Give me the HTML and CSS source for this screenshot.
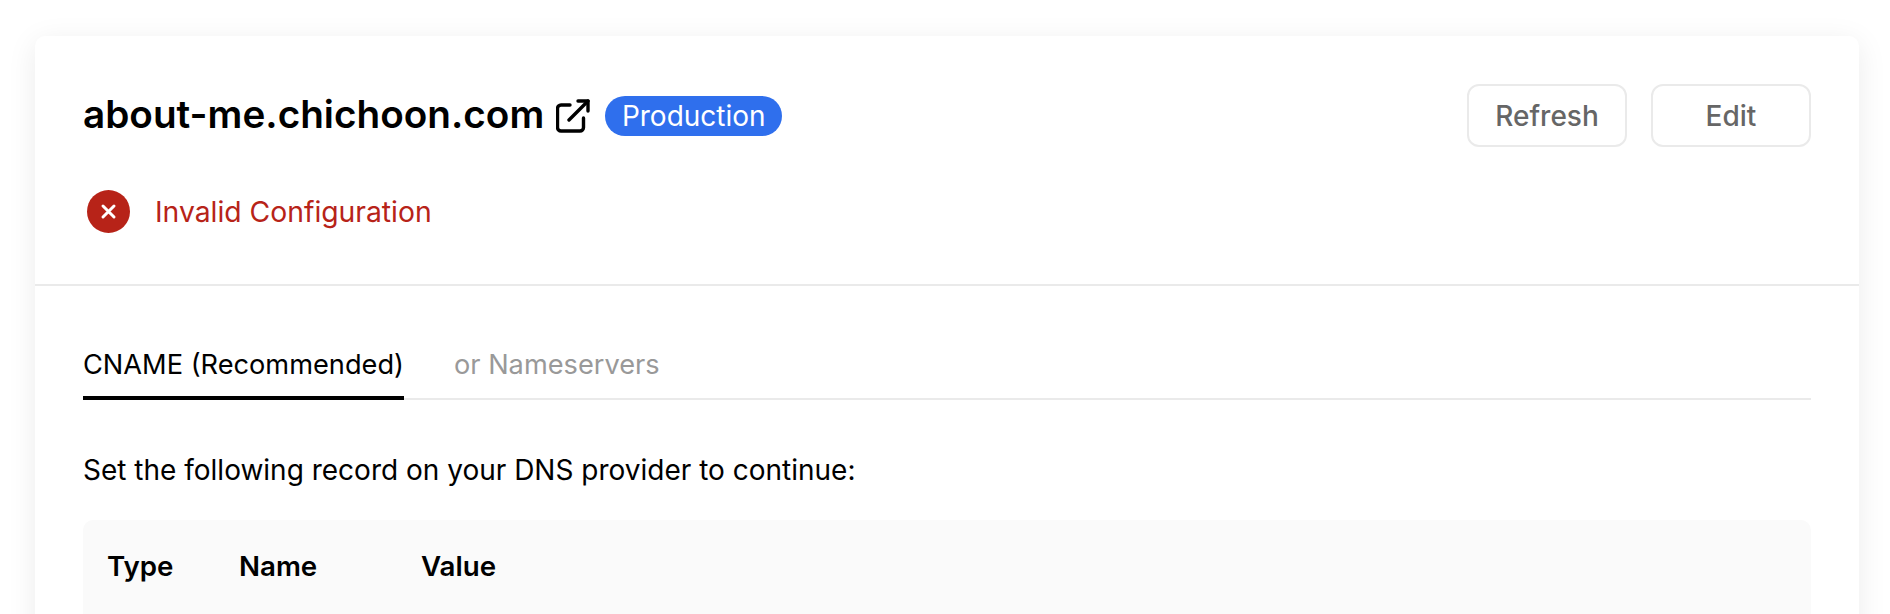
FILE: index.html
```html
<!DOCTYPE html>
<html lang="en">
<head>
    <meta charset="UTF-8">
    <title>about-me.chichoon.com</title>
    <link rel="stylesheet" href="styles.css">
</head>
<body>

<div class="card">
    <div class="card-head">
        <div class="title-row">
            <div class="title-left">
                <h2 class="domain">about-me.chichoon.com</h2>
                <svg class="link-icon" viewBox="0 0 34 34" fill="none" stroke="#000" stroke-width="3.4" stroke-linecap="round" stroke-linejoin="round">
                    <path d="M14 6H5a3.5 3.5 0 0 0-3.5 3.5v19A3.5 3.5 0 0 0 5 32h19a3.5 3.5 0 0 0 3.500-3.500V19"/>
                    <path d="M13 21L32 2"/>
                    <path d="M22 2h10v10"/>
                </svg>
                <span class="badge">Production</span>
            </div>
            <div class="actions">
                <button class="button">Refresh</button>
                <button class="button">Edit</button>
            </div>
        </div>
        <div class="status">
            <svg class="status-icon" viewBox="0 0 43 43">
                <circle cx="21.500" cy="21.500" r="21.500" fill="#b72318"/>
                <path d="M16 16l11 11M27 16L16 27" stroke="#fff" stroke-width="3" stroke-linecap="round"/>
            </svg>
            <span>Invalid Configuration</span>
        </div>
    </div>

    <div class="card-body">
        <div class="tabs">
            <div class="tab active">CNAME (Recommended)</div>
            <div class="tab">or Nameservers</div>
        </div>
        <p class="hint">Set the following record on your DNS provider to continue:</p>
        <div class="record">
            <div class="col-type">Type</div>
            <div class="col-name">Name</div>
            <div>Value</div>
        </div>
    </div>
</div>

</body>
</html>
```

FILE: styles.css
```css
html, body {
    height: 614px;
    overflow: hidden;
}
body {
    margin: 0;
    padding: 36px 31px 0 35px;
    background-color: #fff;
    font-family: Inter, "Liberation Sans", sans-serif;
    color: #000;
}
.card {
    height: 700px;
    background-color: #fff;
    border-radius: 10px;
    box-shadow: 0 6px 30px rgba(0, 0, 0, 0.08);
}
.card-head {
    height: 250px;
    box-sizing: border-box;
    padding: 48px 48px 0;
    border-bottom: 2px solid #eaeaea;
}
.title-row {
    display: flex;
    justify-content: space-between;
    align-items: center;
}
.title-left {
    display: flex;
    align-items: center;
}
.domain {
    margin: 0 0 3px;
    font-size: 38.7px;
    font-weight: 600;
}
.link-icon {
    width: 34px;
    height: 34px;
    margin-left: 12px;
}
.badge {
    margin-left: 15px;
    height: 40px;
    width: 177px;
    box-sizing: border-box;
    text-align: center;
    line-height: 40px;
    font-size: 28px;
    color: #fff;
    background-color: #2f6fed;
    border-radius: 20px;
}
.actions {
    display: flex;
    gap: 24px;
}
.button {
    width: 160px;
    height: 63px;
    font-family: inherit;
    font-size: 28px;
    font-weight: 500;
    color: #666;
    background-color: #fff;
    border: 2px solid #eaeaea;
    border-radius: 12px;
}
.status {
    display: flex;
    align-items: center;
    gap: 25px;
    margin-top: 43px;
    margin-left: 4px;
    font-size: 28.3px;
    color: #b72318;
}
.status-icon {
    width: 43px;
    height: 43px;
}
.card-body {
    padding: 0 48px;
}
.tabs {
    display: flex;
    gap: 50px;
    height: 114px;
    box-sizing: border-box;
    padding-top: 62px;
    border-bottom: 2px solid #eaeaea;
}
.tab {
    height: 52px;
    box-sizing: border-box;
    font-size: 27.2px;
    line-height: 34px;
    color: #999;
}
.tab.active {
    color: #000;
    border-bottom: 4px solid #000;
}
.hint {
    margin: 52px 0 0;
    font-size: 28px;
    line-height: 36px;
}
.record {
    display: flex;
    margin-top: 32px;
    height: 200px;
    box-sizing: border-box;
    padding: 28px 24px;
    background-color: #fafafa;
    border-radius: 10px;
    font-size: 27.7px;
    line-height: 36px;
    font-weight: 600;
}
.col-type {
    width: 132px;
}
.col-name {
    width: 182px;
}
```
